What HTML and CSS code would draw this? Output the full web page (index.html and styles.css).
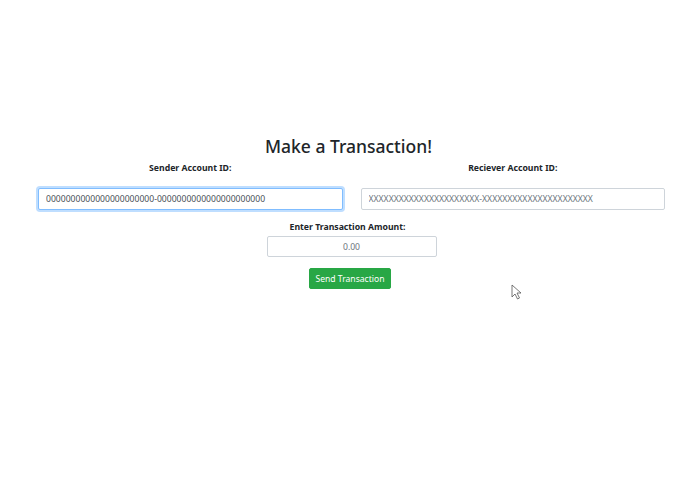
FILE: index.html
```html
<!DOCTYPE html>
<html>
<head>
    <meta charset="utf-8">
    <title>Make a Transaction</title>
    <link rel="stylesheet" href="styles.css">
</head>
<body>
    <div class="page">
        <h1 class="title">Make a Transaction!</h1>
        <form class="transaction-form" onsubmit="event.preventDefault();">
            <div class="accounts">
                <div class="form-field">
                    <label for="sender">Sender Account ID:</label>
                    <input type="text" id="sender" class="form-control focused" value="0000000000000000000000-0000000000000000000000">
                </div>
                <div class="form-field">
                    <label for="receiver">Reciever Account ID:</label>
                    <input type="text" id="receiver" class="form-control" placeholder="XXXXXXXXXXXXXXXXXXXXXX-XXXXXXXXXXXXXXXXXXXXXX">
                </div>
            </div>
            <div class="form-field amount-field">
                <label for="amount">Enter Transaction Amount:</label>
                <input type="text" id="amount" class="form-control amount" placeholder="0.00">
            </div>
            <div class="form-submit">
                <button type="submit" class="btn-send">Send Transaction</button>
            </div>
        </form>
        <svg class="cursor" width="12" height="18" viewBox="0 0 12 18">
            <path d="M1 1 L1 13 L4 10 L6.5 15 L8.5 14 L6 9 L10 9 Z" fill="#fff" stroke="#555" stroke-width="0.8" stroke-linejoin="round"/>
        </svg>
    </div>
</body>
</html>
```
FILE: styles.css
```css
body {
    margin: 0;
    background-color: #fff;
    font-family: 'Noto Sans', 'Open Sans', sans-serif;
    color: #212529;
}

.page {
    position: relative;
    height: 494px;
    padding-top: 133px;
    box-sizing: border-box;
}

.title {
    font-size: 17.5px;
    font-weight: 500;
    line-height: 26px;
    margin: 0 0 2px;
    text-align: center;
    padding-left: 2px;
}

.accounts {
    display: grid;
    grid-template-columns: 1fr 1fr;
    column-gap: 18px;
    margin: 0 30px 0 38px;
}

.form-field {
    display: flex;
    flex-direction: column;
    align-items: center;
}

.form-field label {
    font-size: 8.7px;
    font-weight: bold;
    line-height: 14px;
    margin-bottom: 13px;
}

.form-control {
    box-sizing: border-box;
    width: 100%;
    height: 22px;
    padding: 0 7px;
    font-family: inherit;
    font-size: 8.6px;
    color: #495057;
    background-color: #fff;
    border: 1px solid #ced4da;
    border-radius: 2px;
    outline: none;
}

.form-control::placeholder {
    color: #6c757d;
}

.form-control.focused {
    border-color: #80bdff;
    box-shadow: 0 0 0 2px rgba(0, 123, 255, 0.25);
}

.amount-field {
    margin-top: 10px;
}

.amount-field label {
    margin-bottom: 2px;
}

.form-control.amount {
    width: 170px;
    height: 21px;
    text-align: center;
    margin-left: 8px;
}

.form-submit {
    display: flex;
    justify-content: center;
    margin-top: 11px;
    padding-left: 5px;
}

.btn-send {
    height: 21px;
    padding: 0 5px;
    font-family: inherit;
    font-size: 8.6px;
    color: #fff;
    background-color: #28a745;
    border: 1px solid #28a745;
    border-radius: 2px;
    cursor: pointer;
}

.cursor {
    position: absolute;
    left: 511px;
    top: 284px;
}
```
